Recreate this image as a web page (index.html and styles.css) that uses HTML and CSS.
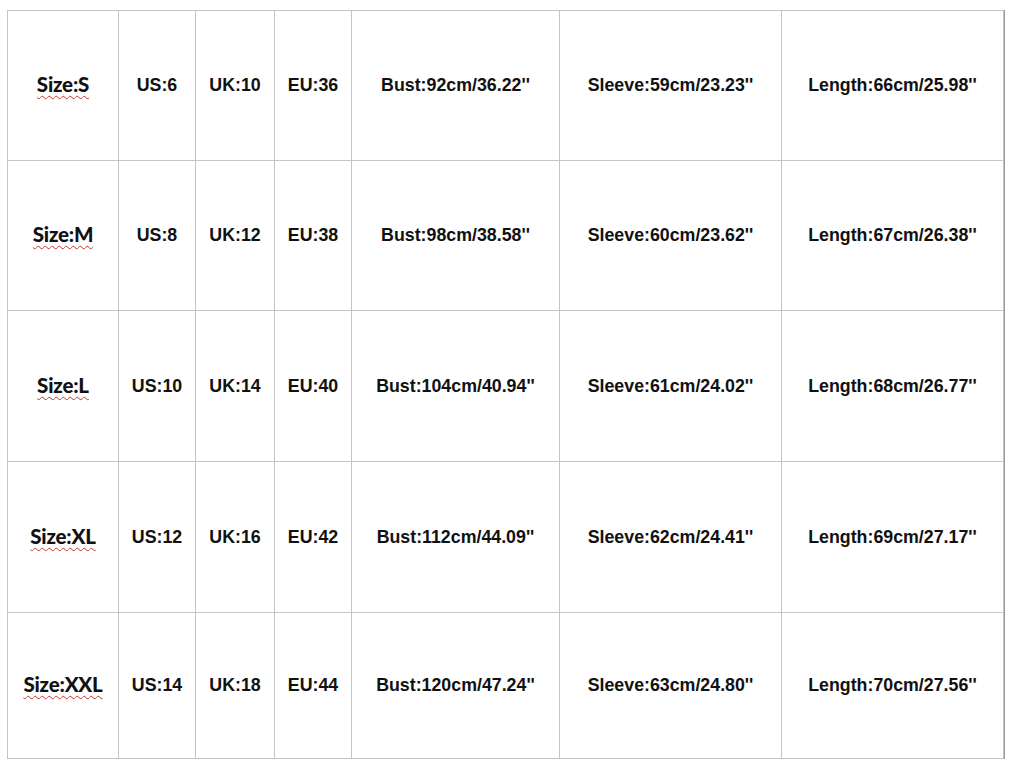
FILE: index.html
```html
<!DOCTYPE html>
<html>
<head>
<meta charset="utf-8">
<link rel="stylesheet" href="styles.css">
</head>
<body>
<div class="chart">
  <div class="cell"><span class="size">Size:S</span></div>
  <div class="cell">US:6</div>
  <div class="cell">UK:10</div>
  <div class="cell">EU:36</div>
  <div class="cell">Bust:92cm/36.22''</div>
  <div class="cell">Sleeve:59cm/23.23''</div>
  <div class="cell">Length:66cm/25.98''</div>

  <div class="cell"><span class="size">Size:M</span></div>
  <div class="cell">US:8</div>
  <div class="cell">UK:12</div>
  <div class="cell">EU:38</div>
  <div class="cell">Bust:98cm/38.58''</div>
  <div class="cell">Sleeve:60cm/23.62''</div>
  <div class="cell">Length:67cm/26.38''</div>

  <div class="cell"><span class="size">Size:L</span></div>
  <div class="cell">US:10</div>
  <div class="cell">UK:14</div>
  <div class="cell">EU:40</div>
  <div class="cell">Bust:104cm/40.94''</div>
  <div class="cell">Sleeve:61cm/24.02''</div>
  <div class="cell">Length:68cm/26.77''</div>

  <div class="cell"><span class="size">Size:XL</span></div>
  <div class="cell">US:12</div>
  <div class="cell">UK:16</div>
  <div class="cell">EU:42</div>
  <div class="cell">Bust:112cm/44.09''</div>
  <div class="cell">Sleeve:62cm/24.41''</div>
  <div class="cell">Length:69cm/27.17''</div>

  <div class="cell"><span class="size">Size:XXL</span></div>
  <div class="cell">US:14</div>
  <div class="cell">UK:18</div>
  <div class="cell">EU:44</div>
  <div class="cell">Bust:120cm/47.24''</div>
  <div class="cell">Sleeve:63cm/24.80''</div>
  <div class="cell">Length:70cm/27.56''</div>
</div>
</body>
</html>
```
FILE: styles.css
```css
html, body {
  background: #ffffff;
}
body {
  margin: 0;
  padding: 10px 0 0 7px;
}
.chart {
  display: grid;
  grid-template-columns: 110px 76px 78px 76px 207px 221px 221px;
  grid-template-rows: 149px 149px 150px 150px 145px;
  gap: 1px;
  padding: 1px;
  width: max-content;
  background: #c4c4c4;
  border-bottom: 1px solid #8a8a8a;
  border-right: 1px solid #9a9a9a;
  margin-bottom: -1px;
}
.cell {
  background: #ffffff;
  display: flex;
  align-items: center;
  justify-content: center;
  font-family: "Liberation Sans", Arial, sans-serif;
  font-weight: bold;
  font-size: 17.8px;
  color: #111111;
  white-space: nowrap;
}
.size {
  font-family: Lato, "Open Sans", sans-serif;
  font-weight: 900;
  font-size: 20.5px;
  letter-spacing: -0.2px;
  margin-bottom: 3px;
  text-decoration: underline wavy #c0392b;
  text-decoration-thickness: 1px;
  text-underline-offset: 3px;
}
```
